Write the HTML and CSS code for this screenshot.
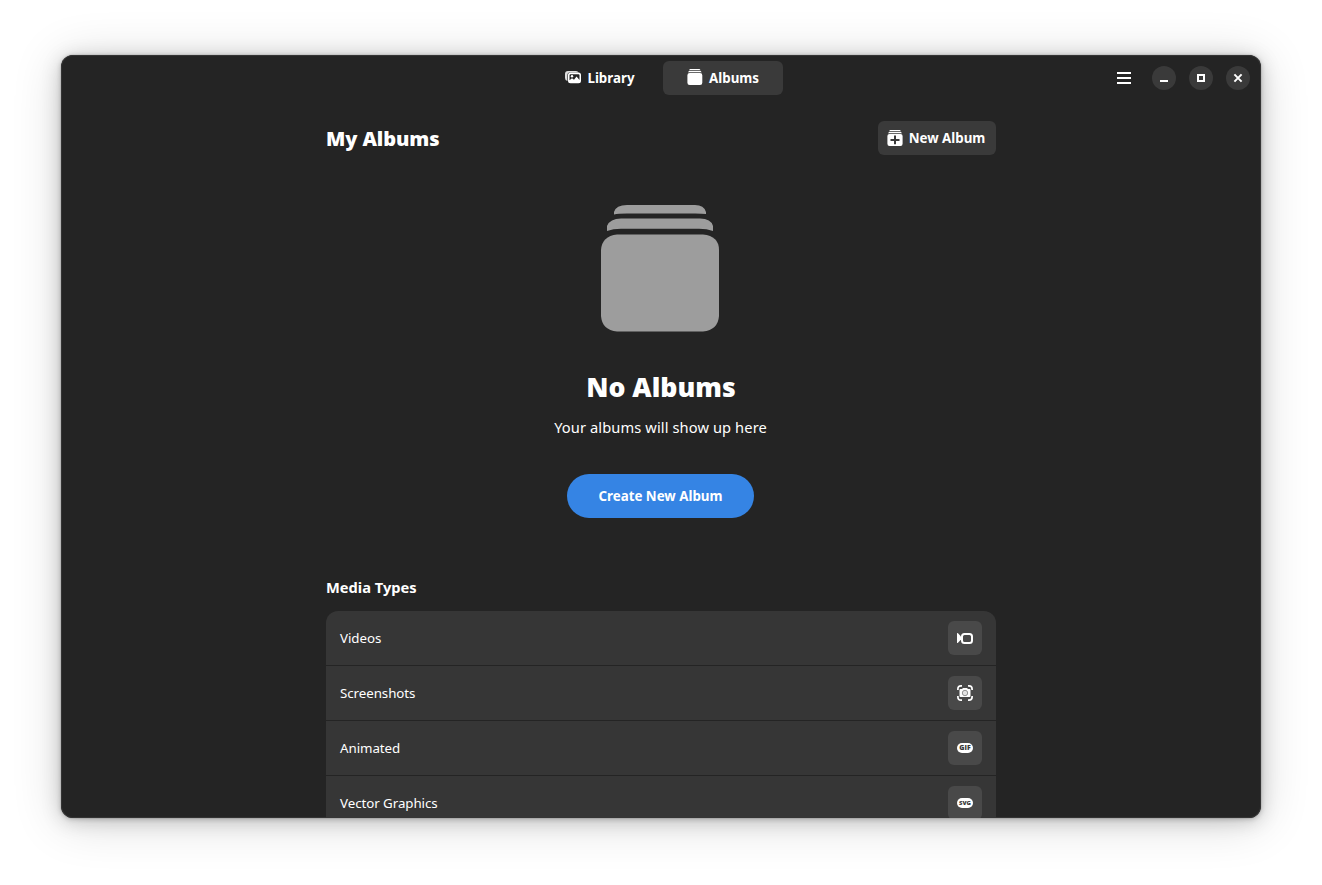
FILE: index.html
```html
<!DOCTYPE html>
<html lang="en">
<head>
<meta charset="utf-8">
<title>Albums</title>
<link rel="stylesheet" href="styles.css">
</head>
<body>
<svg width="0" height="0" class="defs" aria-hidden="true">
  <symbol id="album" viewBox="0 0 128 128">
    <path d="M13 10V8Q15 1 26 1H94Q103 1 105 8V10Q101 9.500 94 9.500H26Q17 9.500 13 10.500Z"/>
    <path d="M6 27V22Q9 14.500 20 14.500H99Q110 14.500 112 22V27Q106 24.800 98 24.800H20Q12 24.800 6 27Z"/>
    <path d="M16 30.500H102Q118 32 118 46V112Q117 126 102 127.500H16Q1 126 0 112V46Q1 32 16 30.500Z"/>
  </symbol>
</svg>
<main class="window">
  <header class="headerbar">
    <nav class="switcher">
      <button class="tab">
        <svg width="16" height="16" viewBox="0 0 16 16"><path d="M3 .9H11Q13 .9 13.500 2.500H4.500Q2.400 2.500 2.400 5.500V11Q0 10.500 0 8V4Q0 .9 3 .9Z" opacity=".85"/><path fill-rule="evenodd" d="M5.500 2.500H13.500Q16 2.500 16 5V10.700Q16 13.200 13.500 13.200H5.500Q3 13.200 3 10.700V5Q3 2.500 5.500 2.500ZM4.500 10.300 7 8.300 9 9.800 11.500 6.500 14.500 10V5.200Q14.500 4.200 13.500 4.200H5.500Q4.500 4.200 4.500 5.200Z"/><circle cx="7" cy="6.300" r="1.200"/></svg>
        <span>Library</span>
      </button>
      <button class="tab active">
        <svg width="16" height="16" viewBox="0 0 16 16"><path d="M3 -1H12.500L13.700 .3H1.800ZM2 1H13.600L14.700 2.300H.9ZM2.700 3H13Q15.300 3 15.300 5.300V12.700Q15.300 15 13 15H2.700Q.4 15 .4 12.700V5.300Q.4 3 2.700 3Z"/></svg>
        <span>Albums</span>
      </button>
    </nav>
    <div class="controls">
      <button class="menu" aria-label="Menu"><svg width="14" height="12" viewBox="0 0 14 12"><path d="M0 0H14V2H0ZM0 5H14V7H0ZM0 10H14V12H0Z"/></svg></button>
      <button class="circle" aria-label="Minimize"><svg width="8" height="8" viewBox="0 0 8 8"><path d="M0 6H8V8H0Z"/></svg></button>
      <button class="circle" aria-label="Maximize"><svg width="8" height="8" viewBox="0 0 8 8"><path d="M1 1H7V7H1Z" class="line"/></svg></button>
      <button class="circle" aria-label="Close"><svg width="8" height="8" viewBox="0 0 8 8"><path d="M.4.4 7.600 7.600M7.600.4.4 7.600" class="line"/></svg></button>
    </div>
  </header>
  <div class="content">
    <div class="heading">
      <h1>My Albums</h1>
      <button class="new">
        <svg width="16" height="16" viewBox="0 0 16 16"><path fill-rule="evenodd" d="M3 0H13L14 1.300H2ZM2 2H14L15 3.300H1ZM2.500 4H13.500Q15.600 4 15.600 6V13.800Q15.600 16 13.500 16H2.500Q.4 16 .4 13.800V6Q.4 4 2.500 4ZM7 5.500V9H3.500V11H7V14.300H9V11H12.500V9H9V5.500Z"/></svg>
        <span>New Album</span>
      </button>
    </div>
    <section class="status">
      <svg class="big" width="128" height="128"><use href="#album"/></svg>
      <h2>No Albums</h2>
      <p>Your albums will show up here</p>
      <button class="pill">Create New Album</button>
    </section>
    <h3>Media Types</h3>
    <div class="list">
      <div class="row"><span>Videos</span><button class="icon" aria-label="Videos"><svg width="16" height="16" viewBox="0 0 16 16"><path d="M0 3.200Q.5 2.800 1 3.300L4 6.500V9.500L1 12.700Q.5 13.200 0 12.800Z"/><rect x="5" y="4" width="10" height="9" rx="2.500" class="line"/></svg></button></div>
      <div class="row"><span>Screenshots</span><button class="icon" aria-label="Screenshots"><svg width="16" height="16" viewBox="0 0 16 16"><path class="line thin" d="M.9 5V4Q.9 .9 4 .9H5M11 .9H12Q15.100 .9 15.100 4V5M15.100 11V12Q15.100 15.100 12 15.100H11M5 15.100H4Q.9 15.100 .9 12V11"/><path d="M3.500 4H5L6 3H10L11 4H12.500Q13.500 4 13.500 5V11Q13.500 12 12.500 12H3.500Q2.500 12 2.500 11V5Q2.500 4 3.500 4Z"/><circle cx="8" cy="8" r="2.700" class="lens"/></svg></button></div>
      <div class="row"><span>Animated</span><button class="icon" aria-label="Animated"><svg width="16" height="10" viewBox="0 0 16 10"><rect width="16" height="10" rx="5"/><text class="badge" x="2.300" y="7.400" textLength="11.400" lengthAdjust="spacingAndGlyphs">GIF</text></svg></button></div>
      <div class="row"><span>Vector Graphics</span><button class="icon" aria-label="Vector Graphics"><svg width="16" height="10" viewBox="0 0 16 10"><rect width="16" height="10" rx="5"/><text class="badge small" x="2" y="7" textLength="12" lengthAdjust="spacingAndGlyphs">SVG</text></svg></button></div>
    </div>
  </div>
</main>
</body>
</html>
```
FILE: styles.css
```css
* { box-sizing: border-box; }
body {
  margin: 0;
  height: 885px;
  padding: 55px 61px;
  overflow: hidden;
  background: #fff;
  color: #fff;
  font: 13.333px "Noto Sans", sans-serif;
}
.defs { position: absolute; }
button {
  border: 0;
  padding: 0;
  color: inherit;
  background: none;
  font: 700 13.333px "Noto Sans", sans-serif;
  display: flex;
  align-items: center;
  justify-content: center;
}
svg { fill: currentColor; display: block; flex: none; overflow: visible; }
.line { fill: none; stroke: currentColor; stroke-width: 2; }
.line.thin { stroke-width: 1.700; }
h1, h2, h3, p { margin: 0; }
.window {
  width: 1200px;
  height: 763px;
  border-radius: 12px;
  overflow: hidden;
  background: #242424;
  box-shadow: inset 0 0 0 1px #343434, 0 0 0 1px rgba(0,0,0,.05), 0 1px 5px rgba(0,0,0,.22), 0 3px 20px rgba(0,0,0,.18), 0 4px 50px rgba(0,0,0,.16);
}
.headerbar {
  height: 46px;
  display: grid;
  grid-template-columns: 1fr auto 1fr;
  align-items: center;
}
.switcher { grid-column: 2; display: flex; gap: 3px; }
.tab { width: 120px; height: 34px; gap: 6px; padding-left: 1px; border-radius: 6px; }
.tab.active { background: #3a3a3a; }
.controls { display: flex; justify-content: flex-end; align-items: center; gap: 13px; padding-right: 11px; }
.menu { width: 14px; margin-right: 8px; }
.circle { width: 24px; height: 24px; border-radius: 50%; background: #3a3a3a; }
.content { width: 670px; margin: 20px auto 0; }
.heading { display: flex; justify-content: space-between; align-items: center; height: 34px; }
h1 { font: 800 20px/34px "Open Sans", "Noto Sans", sans-serif; letter-spacing: -.1px; padding-top: 1px; }
.new { width: 118px; height: 34px; gap: 6px; padding-right: 2px; border-radius: 6px; background: #3a3a3a; }
.status { display: flex; flex-direction: column; align-items: center; padding-top: 49px; }
.big { color: #9d9d9d; margin-left: 8px; }
h2 { font: 800 26.667px/38px "Open Sans", "Noto Sans", sans-serif; margin-top: 36px; }
.status p { font-size: 14.667px; line-height: 20px; letter-spacing: .1px; margin: 11px 1px 0 0; }
.pill { width: 187px; height: 44px; border-radius: 22px; margin: 37px 1px 0 0; background: #3584e4; }
h3 { font-size: 14.667px; font-weight: 700; line-height: 20px; margin-top: 59px; }
.list { margin-top: 14px; background: #363636; border-radius: 12px; }
.row {
  height: 55px;
  padding: 0 14px;
  display: flex;
  align-items: center;
  justify-content: space-between;
  border-bottom: 1px solid #242424;
}
.row span { letter-spacing: -.06px; }
.icon { width: 34px; height: 34px; border-radius: 6px; background: #494949; }
.lens { fill: #e4e4e4; stroke: #959595; stroke-width: 1; }
.badge { fill: #383838; font: 800 6.800px "Open Sans", sans-serif; }
.badge.small { font-size: 5.800px; }
```
